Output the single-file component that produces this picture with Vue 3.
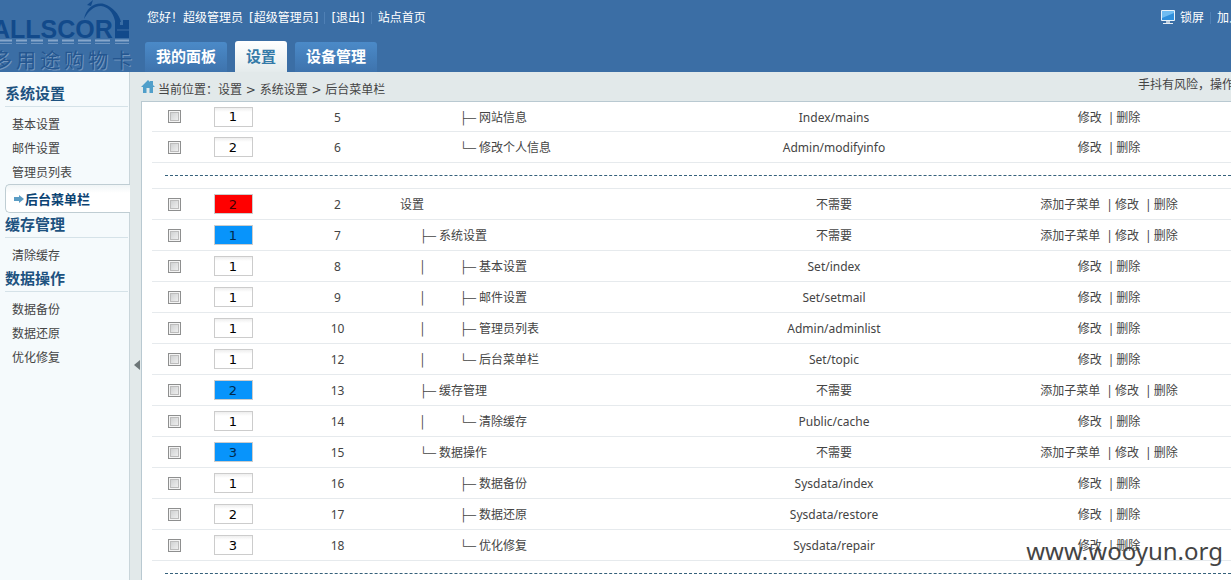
<script setup>
import { ref } from 'vue'

const tabs = ['我的面板', '设置', '设备管理']
const activeTab = ref('设置')

const menu = [
  { title: '系统设置', items: ['基本设置', '邮件设置', '管理员列表', '后台菜单栏'] },
  { title: '缓存管理', items: ['清除缓存'] },
  { title: '数据操作', items: ['数据备份', '数据还原', '优化修复'] },
]
const current = '后台菜单栏'

const groups = ref([
  [
    { order: '1', id: 5, depth: 2, branch: '├─', name: '网站信息', model: 'Index/mains' },
    { order: '2', id: 6, depth: 2, branch: '└─', name: '修改个人信息', model: 'Admin/modifyinfo' },
  ],
  [
    { order: '2', id: 2, depth: 0, name: '设置', model: '不需要' },
    { order: '1', id: 7, depth: 1, branch: '├─', name: '系统设置', model: '不需要' },
    { order: '1', id: 8, depth: 2, bar: true, branch: '├─', name: '基本设置', model: 'Set/index' },
    { order: '1', id: 9, depth: 2, bar: true, branch: '├─', name: '邮件设置', model: 'Set/setmail' },
    { order: '1', id: 10, depth: 2, bar: true, branch: '├─', name: '管理员列表', model: 'Admin/adminlist' },
    { order: '1', id: 12, depth: 2, bar: true, branch: '└─', name: '后台菜单栏', model: 'Set/topic' },
    { order: '2', id: 13, depth: 1, branch: '├─', name: '缓存管理', model: '不需要' },
    { order: '1', id: 14, depth: 2, bar: true, branch: '└─', name: '清除缓存', model: 'Public/cache' },
    { order: '3', id: 15, depth: 1, branch: '└─', name: '数据操作', model: '不需要' },
    { order: '1', id: 16, depth: 2, branch: '├─', name: '数据备份', model: 'Sysdata/index' },
    { order: '2', id: 17, depth: 2, branch: '├─', name: '数据还原', model: 'Sysdata/restore' },
    { order: '3', id: 18, depth: 2, branch: '└─', name: '优化修复', model: 'Sysdata/repair' },
  ],
])
</script>

<template>
  <div class="page">
    <header class="header">
      <div class="logo">
        <svg class="mark" width="132" height="46" viewBox="0 0 132 46" aria-hidden="true">
          <text x="-8" y="38" class="brand">ALLSCOR</text>
          <path d="M84 19 C86 8 95 2 104 4 C113 7 119 14 121 22 L115 21 C113 12 108 7 101 6 C93 6 88 12 84 19Z" fill="#124a8b" />
          <path d="M87 5 L93 0 L91 6Z" fill="#124a8b" />
          <path d="M115 20 H120 V25 H123 V20 H129 V38 H115Z" fill="#124a8b" />
          <path d="M117 30 H129" stroke="#3e6ea5" />
          <path d="M0 40.500 H12 M16 40.500 H27 M31 40.500 H43 M48 40.500 H58 M62 40.500 H74 M78 40.500 H91 M95 40.500 H110 M115 40.500 H129" stroke="#86a6cb" stroke-width="2" />
          <path d="M0 43.500 H12 M16 43.500 H27 M31 43.500 H43 M48 43.500 H58 M62 43.500 H74 M78 43.500 H91 M95 43.500 H110 M115 43.500 H129" stroke="#6f95c0" />
        </svg>
        <div class="slogan"><span v-for="c in '多用途购物卡'" :key="c">{{ c }}</span></div>
      </div>
      <div class="head-main">
        <div class="userline">
          <span>您好！超级管理员</span>
          <span class="role">[超级管理员]</span><i></i>
          <a href="#">[退出]</a><i></i>
          <a href="#">站点首页</a>
        </div>
        <nav class="tabs">
          <button v-for="t in tabs" :key="t" type="button" :class="{ on: t === activeTab }" @click="activeTab = t">{{ t }}</button>
        </nav>
      </div>
      <div class="head-right">
        <svg width="16" height="16" viewBox="0 0 16 16" aria-hidden="true">
          <rect x="0" y="1" width="14" height="11" rx="1" fill="#e8f3fb" />
          <rect x="1" y="2" width="12" height="9" fill="#2f8fdc" />
          <path d="M1 2 H13 V4 L1 9Z" fill="#6fbcf2" />
          <path d="M5 12 H9 V14 H5Z" fill="#b9cbdc" />
          <path d="M2 14 H12 V15 H2Z" fill="#e8eef4" />
        </svg>
        <a href="#">锁屏</a><i></i>
        <a href="#" class="cut">加入</a>
      </div>
    </header>

    <div class="body">
      <aside class="side">
        <section v-for="g in menu" :key="g.title">
          <h3>{{ g.title }}</h3>
          <ul>
            <li v-for="m in g.items" :key="m" :class="{ on: m === current }">
              <svg v-if="m === current" width="10" height="8" viewBox="0 0 10 8" aria-hidden="true">
                <path d="M0 2 H5 V0 L10 4 L5 8 V6 H0Z" fill="#5a9cc4" />
              </svg>
              <a href="#">{{ m }}</a>
            </li>
          </ul>
        </section>
      </aside>
      <button class="fold" type="button" aria-label="收起">
        <svg width="6" height="10" viewBox="0 0 6 10"><path d="M6 0 V10 L0 5Z" fill="#6d7678" /></svg>
      </button>
      <main class="main">
        <div class="crumb">
          <svg width="14" height="13" viewBox="0 0 14 13" aria-hidden="true">
            <path d="M7 0 L9 2 V1 H12 V5 L14 7 H12 V13 H8.500 V8 H5.500 V13 H2 V7 H0Z" fill="#509fca" />
          </svg>
          <span>当前位置：设置 &gt; 系统设置 &gt; 后台菜单栏</span>
          <span class="notice">手抖有风险，操作</span>
        </div>
        <div class="panel">
          <table>
            <colgroup>
              <col class="c-check" /><col class="c-order" /><col class="c-id" /><col /><col class="c-model" /><col class="c-act" />
            </colgroup>
            <tbody v-for="(rows, gi) in groups" :key="gi">
              <tr v-for="r in rows" :key="r.id">
                <td class="check"><input type="checkbox" :aria-label="r.name" /></td>
                <td><input v-model="r.order" class="order" :class="'d' + r.depth" type="text" :aria-label="r.name" /></td>
                <td class="text">{{ r.id }}</td>
                <td class="text name">
                  <span v-if="r.depth" class="trunk"></span><span v-if="r.depth === 2" class="level">{{ r.bar ? '│' : '' }}</span><span v-if="r.branch" class="branch">{{ r.branch }}</span>{{ r.name }}
                </td>
                <td class="text">{{ r.model }}</td>
                <td class="text act">
                  <template v-if="r.depth < 2"><a href="#">添加子菜单</a><b>|</b></template><a href="#">修改</a><b>|</b><a href="#">删除</a>
                </td>
              </tr>
              <tr class="split"><td colspan="6"><div></div></td></tr>
            </tbody>
          </table>
        </div>
      </main>
    </div>
    <div class="watermark">www.wooyun.org</div>
  </div>
</template>

<style>
html,
body {
  height: 100%;
  overflow: hidden;
}
#app {
  height: 100%;
}
</style>

<style scoped>
.page {
  position: relative;
  display: flex;
  flex-direction: column;
  height: 100%;
  overflow: hidden;
  background: #e2e9ea;
  color: #444;
  font: 12px/18px "Noto Sans", "Noto Sans CJK SC", sans-serif;
}
a {
  color: inherit;
  text-decoration: none;
}
.header {
  display: flex;
  flex: none;
  height: 72px;
  background: #3b6ea5;
  color: #fff;
  font-family: "DejaVu Sans", "Noto Sans CJK SC", sans-serif;
}
.logo {
  width: 145px;
  flex: none;
  overflow: hidden;
}
.mark {
  display: block;
}
.brand {
  font: bold 25px "Liberation Sans", sans-serif;
  fill: #124a8b;
}
.slogan {
  display: flex;
  gap: 4px;
  margin-left: -8px;
  font-family: "Noto Sans CJK SC", sans-serif;
  font-size: 20px;
  line-height: 28px;
  color: #245690;
  text-shadow: 1px 1px 0 #7396be;
}
.head-main {
  flex: 1;
  display: flex;
  flex-direction: column;
  justify-content: space-between;
}
.userline {
  display: flex;
  padding: 9px 2px 0;
  white-space: nowrap;
}
.role {
  margin-left: 6px;
}
.userline i,
.head-right i {
  width: 1px;
  height: 12px;
  margin: 3px 6px;
  background: #4f80b5;
}
.tabs {
  display: flex;
  align-items: flex-end;
  gap: 8px;
}
.tabs button {
  height: 30px;
  padding: 0 11px;
  border: 0;
  border-radius: 3px 3px 0 0;
  background: linear-gradient(#4b8ac8, #3e73ad);
  color: #fff;
  font: bold 15px/28px "Liberation Sans", "Noto Sans CJK SC", sans-serif;
}
.tabs button.on {
  height: 31px;
  background: linear-gradient(#fff, #e4ebec);
  color: #347aa8;
}
.head-right {
  display: flex;
  padding-top: 9px;
  white-space: nowrap;
}
.head-right svg {
  margin-right: 3px;
}
.cut {
  width: 14px;
  overflow: hidden;
}
.body {
  display: flex;
  flex: 1;
  min-height: 0;
}
.side {
  flex: none;
  width: 129px;
  padding-top: 10px;
  border-right: 1px solid #c9d5da;
  background: #f5fafc;
}
.side h3 {
  height: 24px;
  margin: 0 1px 0 5px;
  border-bottom: 1px solid #d5e2e8;
  color: #1d5280;
  font: bold 15px/24px "Liberation Sans", "Noto Sans CJK SC", sans-serif;
}
.side ul {
  margin: 0;
  padding: 5px 0 0;
  list-style: none;
}
.side li {
  height: 24px;
  padding-left: 12px;
  line-height: 26px;
}
.side li.on {
  display: flex;
  align-items: center;
  gap: 1px;
  height: 27px;
  margin: 0 -1px 0 5px;
  padding-left: 8px;
  border: 1px solid #bfcdd3;
  border-right: 0;
  border-radius: 5px 0 0 5px;
  background: linear-gradient(#f0f5f6, #fff 8px);
  color: #0b4373;
  font-weight: bold;
  font-size: 13px;
}
.fold {
  flex: none;
  width: 11px;
  padding: 6px 0 0 4px;
  border: 0;
  background: #e2e9ea;
}
.fold svg {
  display: block;
  margin-top: 72px;
}
.main {
  flex: 1;
  min-width: 0;
  display: flex;
  flex-direction: column;
}
.crumb {
  display: flex;
  align-items: center;
  gap: 3px;
  flex: none;
  height: 29px;
  font-family: "DejaVu Sans", "Noto Sans CJK SC", sans-serif;
  white-space: nowrap;
}
.crumb span {
  padding-top: 6px;
}
.crumb .notice {
  width: 93px;
  margin-left: auto;
  padding: 0 0 4px;
  overflow: hidden;
}
.panel {
  flex: 1;
  min-height: 0;
  overflow: hidden;
  padding-left: 10px;
  border: solid #b9c9d1;
  border-width: 1px 0 0 1px;
  background: #fff;
}
table {
  width: 100%;
  table-layout: fixed;
  border-collapse: separate;
  border-spacing: 0;
}
.c-check {
  width: 39px;
}
.c-order {
  width: 84px;
}
.c-id {
  width: 125px;
}
.c-model {
  width: 306px;
}
.c-act {
  width: 244px;
}
td {
  box-sizing: border-box;
  height: 31px;
  padding: 0;
  border-bottom: 1px solid #e6eaed;
  text-align: center;
  white-space: nowrap;
}
tbody:first-of-type tr:first-child td {
  height: 30px;
}
td.text {
  padding-top: 2px;
}
td.check {
  padding-left: 5px;
}
td input {
  display: block;
  box-sizing: border-box;
  margin: 0 auto;
}
.check input {
  appearance: none;
  width: 13px;
  height: 13px;
  border: 1px solid #8e8f8f;
  background: linear-gradient(135deg, #c8cacb, #f6f6f6);
  box-shadow: inset 0 0 0 1px #f4f4f4, inset 0 0 0 2px #bcbcbc;
}
.order {
  width: 39px;
  height: 20px;
  padding: 0;
  border: 1px solid #ccc;
  background: linear-gradient(#eee, #fff 4px);
  color: #000;
  font: 13px "DejaVu Sans", sans-serif;
  text-align: center;
}
.order.d0 {
  background: #f00;
  color: #400;
}
.order.d1 {
  background: #0894fb;
  color: #002a4d;
}
td.name {
  text-align: left;
}
.trunk,
.level,
.branch {
  display: inline-block;
  font-family: "Liberation Sans", sans-serif;
}
.trunk {
  width: 19px;
}
.level {
  width: 40px;
}
.branch {
  width: 20px;
}
.act b {
  margin: 0 2px 0 6px;
  font-weight: normal;
}
.split td {
  height: 26px;
}
.split div {
  margin: 0 0 0 13px;
  border-top: 1px dashed #35617b;
}
.watermark {
  position: absolute;
  right: 8px;
  bottom: 12px;
  color: #444;
  font: 24px/34px "Noto Sans", sans-serif;
}
</style>
